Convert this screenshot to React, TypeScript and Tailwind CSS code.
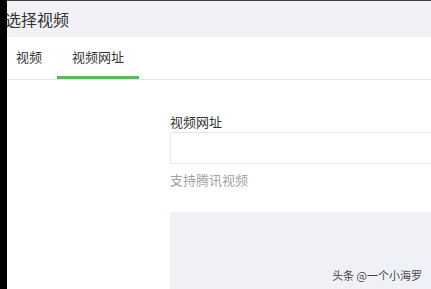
export default function App() {
  const font = { fontFamily: '"Noto Sans CJK SC", "Noto Sans", sans-serif' };
  return (
    <div className="flex h-[289px] w-[431px] overflow-hidden bg-white" style={font}>
      <div className="w-[7px] shrink-0 bg-black" />
      <div className="flex min-w-0 flex-1 flex-col">
        <div className="h-px bg-[#3c3c3c]" />
        <div className="flex h-[36px] items-center bg-[#f1f1f6] text-[16px] leading-none text-[#333]">
          <span className="-ml-[2px]">选择视频</span>
        </div>
        <div className="flex h-[43px] items-stretch border-b border-[#e4e4e8] text-[13px] text-[#333]">
          <div className="flex w-[50px] items-center pl-[9px] pb-[3px]">视频</div>
          <div className="relative flex items-center px-[15px] pb-[3px]">
            视频网址
            <div className="absolute bottom-0 left-0 right-0 h-[3px] bg-[#5cb85c]" />
          </div>
        </div>
        <div className="relative flex flex-1 flex-col pl-[163px] pt-[34px]">
          <div className="text-[13px] leading-[16px] text-[#333]">视频网址</div>
          <div className="mt-[2px] h-[32px] border border-r-0 border-[#e6e6ea] bg-white" />
          <div className="mt-[8px] text-[13px] leading-[16px] text-[#a3a3a3]">支持腾讯视频</div>
          <div className="mt-[24px] flex-1 bg-[#f0f1f6]" />
          <div className="absolute bottom-[8px] right-[9px] text-[11px] leading-none text-[#444] [text-shadow:0_0_2px_#fff]">
            头条 @一个小海罗
          </div>
        </div>
      </div>
    </div>
  );
}
